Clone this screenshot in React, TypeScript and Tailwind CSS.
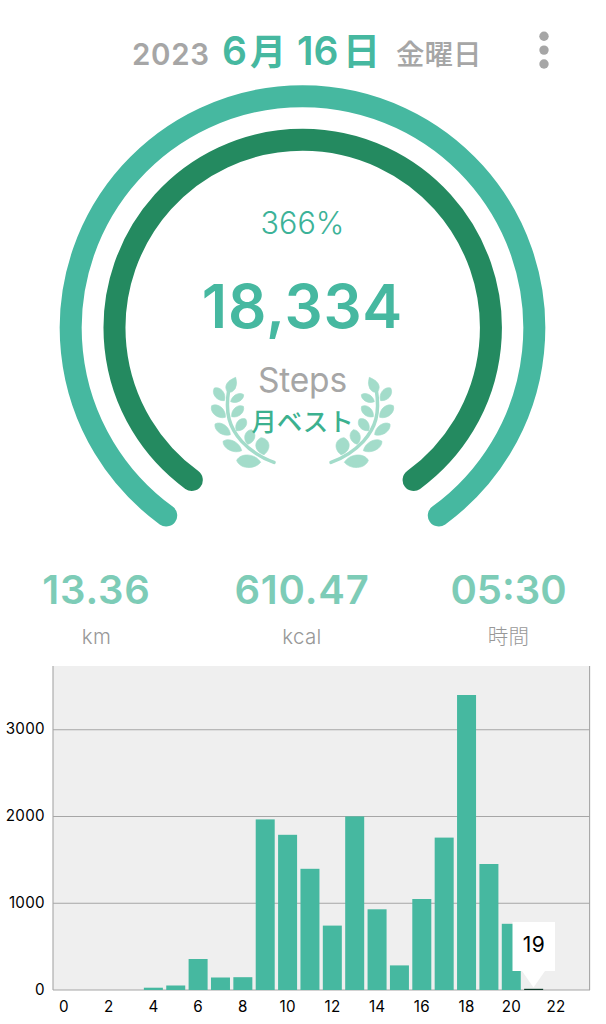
import React from "react";

const SANS = "font-['Inter','Noto_Sans_CJK_JP',sans-serif]";

type Leaf = [number, number, number, number, number];

// Each leaf: tip x/y, base x/y, half width
const LEAVES: Leaf[] = [
  [43, 99, 73, 137, 15],
  [35, 152, 76, 187, 16],
  [45, 207, 91, 239, 15],
  [69, 259, 125, 287, 16],
  [110, 316, 182, 322, 20],
  [131, 119, 92, 140, 12],
  [130, 154, 95, 185, 14],
  [137, 192, 109, 227, 15],
  [155, 224, 143, 268, 16],
  [183, 248, 192, 299, 21],
];

function leafPath([x1, y1, x2, y2, w]: Leaf) {
  const dx = x2 - x1;
  const dy = y2 - y1;
  const len = Math.hypot(dx, dy);
  const nx = (-dy / len) * w;
  const ny = (dx / len) * w;
  const p = (t: number, s: number) => `${x1 + dx * t + nx * s} ${y1 + dy * t + ny * s}`;
  return `M${x1} ${y1}C${p(0.15, 1.25)} ${p(0.75, 1.25)} ${x2} ${y2}C${p(0.75, -1.25)} ${p(0.15, -1.25)} ${x1} ${y1}Z`;
}

function Laurel({ flip = false }: { flip?: boolean }) {
  return (
    <svg viewBox="30 60 201 285" className={flip ? "h-[95px] w-[67px] -scale-x-100" : "h-[95px] w-[67px]"}>
      <g fill="#a3dcca" stroke="#a3dcca" strokeWidth="2" strokeLinejoin="round">
        <path d="M107 67C80 78 71 94 82 110Q96 116 106 100Q113 86 107 67Z" />
        {LEAVES.map((l) => (
          <path key={l.join()} d={leafPath(l)} />
        ))}
      </g>
      <path d="M86 105C75 175 88 218 125 259C152 288 185 309 222 322" fill="none" stroke="#a3dcca" strokeWidth="10.5" strokeLinecap="round" />
    </svg>
  );
}

function Gauge() {
  return (
    <svg viewBox="0 0 606 480" className="col-start-1 row-start-1 h-[480px] w-[606px]" fill="none" strokeWidth="22" strokeLinecap="round">
      <path d="M166.2 435.5A231.8 231.8 0 1 1 438.8 435.5" stroke="#46b8a0" />
      <path d="M191.8 400A188.2 188.2 0 1 1 413.6 400" stroke="#248a60" />
    </svg>
  );
}

function Stat({ value, unit, className }: { value: string; unit: string; className: string }) {
  return (
    <div className={`flex flex-col items-center whitespace-nowrap ${className}`}>
      <span className="text-[40px] leading-[50px] font-semibold text-[#7dccb7]">{value}</span>
      <span className="mt-[6px] text-[20.5px] leading-8 font-light tracking-[0.3px] text-[#989898]">{unit}</span>
    </div>
  );
}

// Top edge of each hourly bar, in chart pixels
const BAR_TOPS = [
  324, 324, 324, 324, 321.7, 319.5, 293, 311.5, 311.2, 153.4, 168.8, 202.8, 259.6, 150.4, 243.3, 299.4, 233, 171.6, 29, 198, 257.8, 322.8,
];
const BASE = 324;
const STEP = 22.37;

function Chart() {
  return (
    <svg viewBox="0 0 606 358" className="h-[358px] w-[606px]">
      <rect x="53" y="0" width="537" height="324" fill="#efefef" />
      {[63.7, 150.5, 237.2, 324].map((y) => (
        <line key={y} x1="53" x2="590" y1={y} y2={y} stroke="#a6a6a6" strokeWidth="1.1" />
      ))}
      <path d="M53 0V324M589.6 0V324" stroke="#a6a6a6" strokeWidth="1.1" />
      {BAR_TOPS.map((top, i) => {
        const x = 52.7 + STEP * (i + 0.5) - 9.5;
        return <rect key={i} x={x} y={top} width="19" height={BASE - top} fill={i === 21 ? "#0c3a28" : "#46b8a0"} />;
      })}
      <g fontSize="15.2" fill="#000" className={SANS} letterSpacing="0.3">
        {["3000", "2000", "1000", "0"].map((t, i) => (
          <text key={t} x="45" y={68.3 + i * 86.8} textAnchor="end">{t}</text>
        ))}
        {[0, 2, 4, 6, 8, 10, 12, 14, 16, 18, 20, 22].map((h) => (
          <text key={h} x={64 + h * STEP} y="345.5" textAnchor="middle">{h}</text>
        ))}
      </g>
      <path d="M512.5 256H555V305H545L533.5 321.5L522 305H512.5Z" fill="#fff" />
      <text x="534" y="286" textAnchor="middle" fontSize="21" letterSpacing="0.5" fill="#000" className={SANS}>19</text>
    </svg>
  );
}

export default function App() {
  return (
    <main className={`flex h-[1024px] w-[606px] flex-col overflow-hidden bg-white ${SANS}`}>
      <header className="flex h-20 items-baseline pt-[26px] pl-[132px] leading-[50px] whitespace-nowrap text-[#a6a6a6]">
        <span className="w-[90px] text-[29.5px] font-semibold tracking-[0.7px]">2023</span>
        <h1 className="flex w-[174px] items-baseline text-[39px] font-semibold text-[#46b8a0]">
          <span className="w-[28px]">6</span>
          <span className="w-[47px] text-[36px] font-bold">月</span>
          <span className="w-[46px]">16</span>
          <span className="text-[37px] font-bold">日</span>
        </h1>
        <span className="w-[142px] text-[28.5px] font-medium">金曜日</span>
        <svg viewBox="0 0 12 44" className="h-11 w-3 self-start" fill="#a6a6a6">
          <circle cx="6" cy="10.2" r="4.7" />
          <circle cx="6" cy="24.1" r="4.7" />
          <circle cx="6" cy="38" r="4.7" />
        </svg>
      </header>

      <section className="grid h-[480px]">
        <Gauge />
        <div className="col-start-1 row-start-1 flex flex-col items-center pt-[123px] pr-px whitespace-nowrap">
          <span className="text-[30.5px] leading-10 font-light text-[#3cb298]">366%</span>
          <strong className="mt-[23px] text-[60px] leading-[80px] font-semibold tracking-[0.8px] text-[#46b8a0]">18,334</strong>
          <span className="mt-[12px] text-[33.5px] leading-[44px] tracking-[-0.2px] text-[#a6a6a6]">Steps</span>
          <div className="-mt-[27px] flex h-[95px] w-[185px] items-center justify-between">
            <Laurel />
            <span className="-mx-10 -mt-0.5 text-[25.5px] leading-8 font-medium text-[#3cb18f]">月ベスト</span>
            <Laurel flip />
          </div>
        </div>
      </section>

      <section className="flex h-[106px] pt-[5px]">
        <Stat value="13.36" unit="km" className="w-[193px] [&>span:first-child]:tracking-[0.8px]" />
        <Stat value="610.47" unit="kcal" className="w-[218px] [&>span:first-child]:tracking-[0.8px]" />
        <Stat value="05:30" unit="時間" className="w-[195px]" />
      </section>

      <Chart />
    </main>
  );
}
